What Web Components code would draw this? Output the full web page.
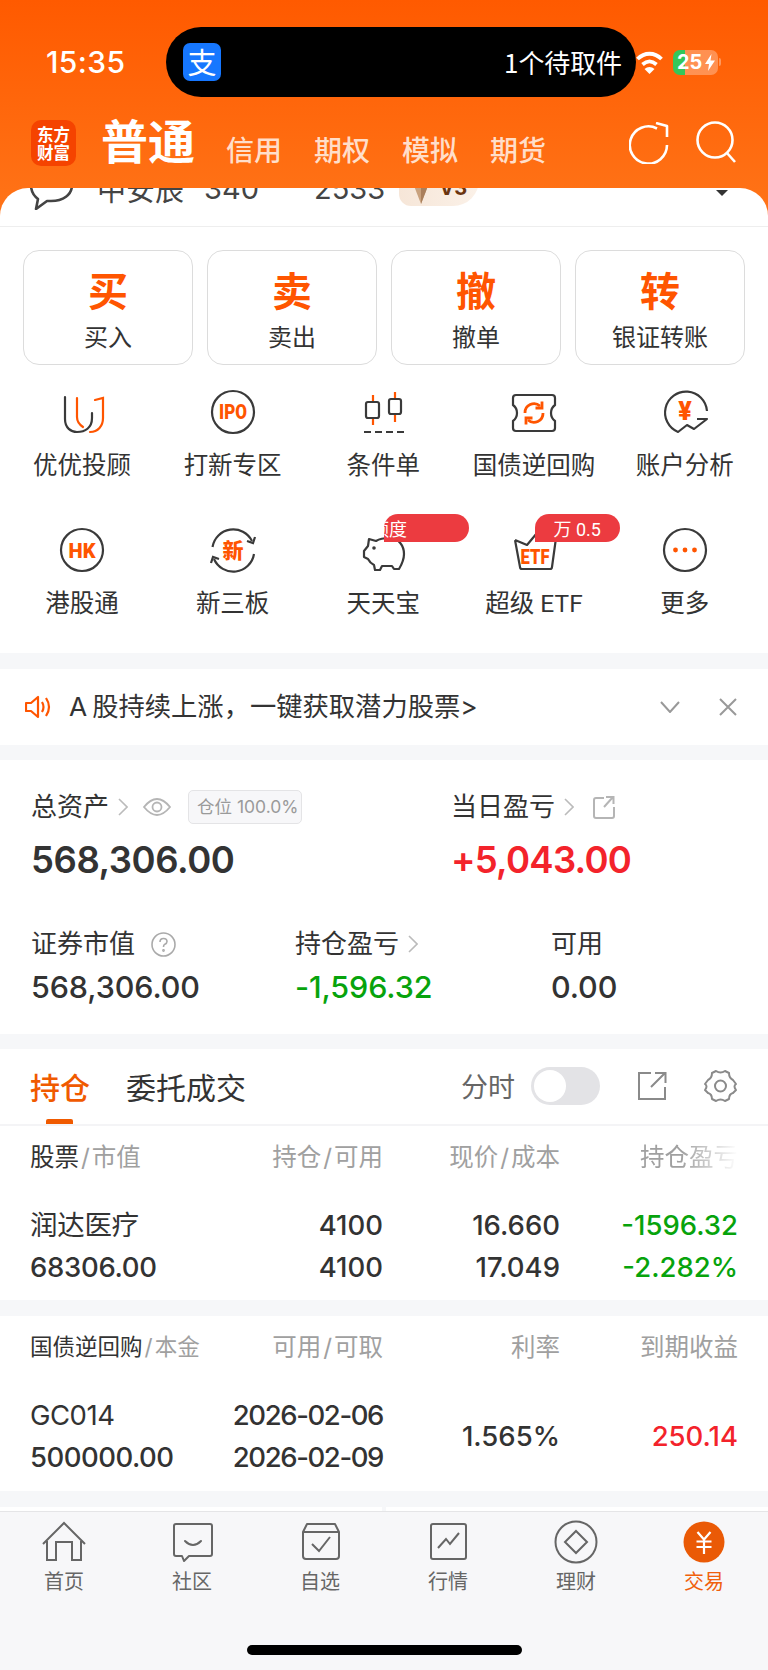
<!DOCTYPE html>
<html lang="zh">
<head>
<meta charset="utf-8">
<title>交易</title>
<style>
html, body { margin: 0; padding: 0; }
body {
  width: 768px;
  height: 1670px;
  overflow: hidden;
  font-family: Inter, "Noto Sans CJK SC", sans-serif;
  color: #333;
  background: #f6f7f9;
}
</style>
</head>
<body>
<trade-app>
  <status-bar></status-bar>
  <account-tabs></account-tabs>
  <trade-card></trade-card>
  <notice-bar></notice-bar>
  <asset-summary></asset-summary>
  <position-list></position-list>
  <bond-list></bond-list>
  <tab-bar></tab-bar>
</trade-app>

<script>
const ORANGE = '#ff5500';
const DARK = '#3a3a3a';

const glyph = (x, y, size, text, width) =>
  `<text x="${x}" y="${y}" font-size="${size}" font-weight="900" fill="${ORANGE}" text-anchor="middle" font-family="Roboto, 'Noto Sans CJK SC', sans-serif" ${width ? `textLength="${width}" lengthAdjust="spacingAndGlyphs"` : ''}>${text}</text>`;

const ICONS = {
  uj: `<g stroke-linecap="round"><path d="M5 7V29C5 38 11 42 17 42C25 42 32 38 32 28V23" stroke="${DARK}"/><path d="M17 8V27Q17 33 23 37" stroke="${ORANGE}"/><path d="M30 42C38 42 43 36 43 28V8L35 10" stroke="${ORANGE}"/></g>`,
  ipo: `<circle cx="22" cy="22" r="21" stroke="${DARK}"/>${glyph(22, 29, 19.5, 'IPO', 28)}`,
  cond: `<path d="M12 5V35M34 2V32" stroke="${ORANGE}"/><rect x="5" y="12" width="13" height="16" rx="2" fill="#fff" stroke="${DARK}"/><rect x="28" y="9" width="12" height="15" rx="2" fill="#fff" stroke="${DARK}"/><path d="M3 42H43" stroke="${DARK}" stroke-dasharray="7 4"/>`,
  ticket: `<path d="M4 5H40Q43 5 43 8V15Q39 18 39 23Q39 28 43 31V38Q43 41 40 41H4Q1 41 1 38V31Q5 28 5 23Q5 18 1 15V8Q1 5 4 5Z" stroke="${DARK}"/><path d="M13 23A9 9 0 0 1 28 16M31 23A9 9 0 0 1 16 30" stroke="${ORANGE}" stroke-width="2.8"/><path d="M30 11.500V18H23.500M14 34.500V28H20.500" stroke="${ORANGE}" stroke-width="2.800"/>`,
  yen: `<path d="M44 21A21 21 0 1 0 15 42L24 35L31 39L44 29H34" stroke="${DARK}" stroke-linejoin="round"/>${glyph(22, 30, 25, '¥')}`,
  hk: `<circle cx="22" cy="22" r="21" stroke="${DARK}"/>${glyph(22, 29.5, 21, 'HK', 27)}`,
  neeq: `<path d="M1.500 19A21 21 0 0 1 41 13M43 26A21 21 0 0 1 3 31" stroke="${DARK}"/><path d="M36 13L42 15L44 9M8 31L2 29L0 35" stroke="${DARK}"/>${glyph(22, 29.5, 21, '新')}`,
  pig: `<path d="M3 23L7 18L8 11L15 13Q20 10 28 10C38 10 43 18 43 26C43 32 41 36 38 41H33L31 38H21L19 42H14L13 37Q9 35 7 31L3 29Z" stroke="${DARK}" stroke-linejoin="round"/><circle cx="13" cy="20" r="1.8" fill="${DARK}"/>`,
  etf: `<path d="M3 12L15 17L25 5M3 12L8 39Q8 41 10 41H38Q40 41 40 39L44 10" stroke="${DARK}" stroke-linejoin="round"/>${glyph(23, 35.5, 21, 'ETF', 29)}`,
  more: `<circle cx="22" cy="22" r="21" stroke="${DARK}"/><circle cx="12.5" cy="22" r="2.4" fill="${ORANGE}"/><circle cx="22" cy="22" r="2.4" fill="${ORANGE}"/><circle cx="31.5" cy="22" r="2.4" fill="${ORANGE}"/>`,
  home: `<g stroke="#666" stroke-width="2"><path d="M1 23L22 2L43 23"/><path d="M5 20V39H14V21H30V39H39V20"/></g>`,
  talk: `<path d="M6 3H40Q42 3 42 5V33Q42 35 40 35H19L14 40L12 35H6Q4 35 4 33V5Q4 3 6 3Z" stroke="#666" stroke-width="2" stroke-linejoin="round"/><path d="M15 20Q23 28 31 20" stroke="#666" stroke-width="2" stroke-linecap="round"/>`,
  pick: `<path d="M5 11V35Q5 38 8 38H38Q41 38 41 35V11M5 11L9 3H37L41 11H5Z" stroke="#666" stroke-width="2" stroke-linejoin="round"/><path d="M14 23L21 30L32 16" stroke="#666" stroke-width="2"/>`,
  quote: `<rect x="5" y="3" width="35" height="35" rx="2" stroke="#666" stroke-width="2"/><path d="M12 27L20 18L24 23L33 12" stroke="#666" stroke-width="2"/>`,
  wealth: `<circle cx="22" cy="21" r="20.5" stroke="#666" stroke-width="2"/><path d="M22 10L33 21L22 32L11 21Z" stroke="#666" stroke-width="2"/>`,
  trade: `<circle cx="22" cy="21" r="20.5" fill="#ea5a06"/><path d="M15.500 11L22 18.500L28.500 11M14.500 20.500H29.500M14.500 26H29.500M22 18.500V33" stroke="#fff" stroke-width="2.200"/>`
};

class AppIcon extends HTMLElement {
  connectedCallback() {
    const name = this.getAttribute('name');
    this.attachShadow({ mode: 'open' }).innerHTML = `
      <style>
      :host { display: block; width: 44px; height: 44px; }
      svg { display: block; overflow: visible; }
      </style>
      <svg width="44" height="44" viewBox="0 0 44 44" fill="none" stroke-width="2.2">${ICONS[name]}</svg>`;
  }
}

class TradeApp extends HTMLElement {
  constructor() {
    super();
    this.attachShadow({ mode: 'open' }).innerHTML = `
      <style>
      :host {
        display: flex;
        flex-direction: column;
        width: 768px;
        height: 1670px;
        overflow: hidden;
        background: linear-gradient(#ff5a00, #ff7418) no-repeat 0 0 / 100% 216px, #f6f7f9;
      }
      </style>
      <slot></slot>`;
  }
}

class StatusBar extends HTMLElement {
  constructor() {
    super();
    this.attachShadow({ mode: 'open' }).innerHTML = `
      <style>
      :host {
        display: flex;
        align-items: center;
        box-sizing: border-box;
        height: 70px;
        margin-top: 27px;
        padding-left: 46px;
        color: #fff;
      }
      .time { width: 120px; font: 500 30px/1 Inter, sans-serif; letter-spacing: 0.4px; }
      .island {
        display: flex;
        align-items: center;
        justify-content: space-between;
        box-sizing: border-box;
        width: 470px;
        height: 70px;
        padding: 0 14px 0 17px;
        border-radius: 35px;
        background: #000;
      }
      .pay {
        width: 38px;
        height: 38px;
        border-radius: 7px;
        background: #1677ff;
        text-align: center;
        font: 400 29px/37px "Noto Sans CJK SC", sans-serif;
      }
      .pickup { font: 400 26px/1 "Noto Sans CJK SC", sans-serif; letter-spacing: -0.1px; }
      .battery {
        position: relative;
        width: 45px;
        height: 25px;
        margin-left: 10px;
        border-radius: 7px;
        overflow: hidden;
        background: linear-gradient(90deg, #34c759 26%, rgba(255, 255, 255, 0.3) 26%);
        text-align: left;
        font: 700 20px/25px Inter, sans-serif;
        text-indent: 4px;
      }
      .battery svg { position: absolute; right: 3px; top: 4px; }
      .nub { width: 2px; height: 8px; margin-left: 1px; border-radius: 0 2px 2px 0; background: rgba(255, 255, 255, 0.35); }
      </style>
      <span class="time">15:35</span>
      <div class="island">
        <div class="pay">支</div>
        <span class="pickup">1个待取件</span>
      </div>
      <svg width="27" height="23" viewBox="0 0 27 23" fill="none" stroke="#fff" stroke-width="3.8"><path d="M1.500 8C8.500 1 18.500 1 25.500 8M6.500 13.500C11 9.500 16 9.500 20.500 13.500"/><path d="M13.500 23L8.500 18C11.500 15.200 15.500 15.200 18.500 18Z" fill="#fff" stroke="none"/></svg>
      <div class="battery">25<svg width="10" height="17" viewBox="0 0 10 17"><path d="M6.5 0L0 10H4L3 17L10 6.5H5.5Z" fill="#fff"/></svg></div>
      <div class="nub"></div>`;
  }
}

class AccountTabs extends HTMLElement {
  constructor() {
    super();
    this.attachShadow({ mode: 'open' }).innerHTML = `
      <style>
      :host {
        display: flex;
        align-items: flex-start;
        box-sizing: border-box;
        height: 91px;
        padding: 23px 0 0 31px;
        color: #fff;
        font-family: "Noto Sans CJK SC", sans-serif;
      }
      .logo {
        width: 45px;
        height: 46px;
        margin-right: 25px;
        padding-top: 5px;
        box-sizing: border-box;
        border-radius: 10px;
        background: #f54300;
        text-align: center;
        font-size: 16.5px;
        line-height: 18px;
        font-weight: 700;
      }
      .active { width: 125px; margin-top: -4px; font-size: 47px; line-height: 46px; font-weight: 700; }
      .tab { width: 88px; margin-top: 9px; font-size: 28px; line-height: 40px; font-weight: 500; color: rgba(255, 255, 255, 0.78); }
      .tools { display: flex; gap: 27px; margin-left: auto; padding-right: 32px; }
      .refresh { margin-top: 2px; }
      .search { margin-top: 1px; }
      </style>
      <div class="logo">东方<br>财富</div>
      <span class="active">普通</span>
      <span class="tab">信用</span>
      <span class="tab">期权</span>
      <span class="tab">模拟</span>
      <span class="tab">期货</span>
      <div class="tools">
        <svg class="refresh" width="40" height="42" viewBox="0 0 40 42" fill="none" stroke="#fff" stroke-width="2.6"><path d="M38 23A18.6 18.6 0 1 1 28 6.5"/><path d="M27 1L38 4V15" stroke-linejoin="round"/></svg>
        <svg class="search" width="40" height="42" viewBox="0 0 40 42" fill="none" stroke="#fff" stroke-width="2.6"><circle cx="19" cy="19" r="17.5"/><path d="M31 32L39 41"/></svg>
      </div>`;
  }
}

class ActionButton extends HTMLElement {
  connectedCallback() {
    this.attachShadow({ mode: 'open' }).innerHTML = `
      <style>
      :host {
        display: flex;
        flex-direction: column;
        align-items: center;
        box-sizing: border-box;
        height: 115px;
        padding-top: 10px;
        border: 1px solid #dcdcdc;
        border-radius: 16px;
        font-family: "Noto Sans CJK SC", sans-serif;
      }
      .big { font-size: 40px; line-height: 56px; font-weight: 700; color: ${ORANGE}; }
      .small { font-size: 24px; line-height: 34px; margin-top: 2px; color: #333; }
      </style>
      <span class="big">${this.getAttribute('mark')}</span>
      <span class="small">${this.getAttribute('label')}</span>`;
  }
}

class MenuItem extends HTMLElement {
  connectedCallback() {
    const badge = this.getAttribute('badge');
    const shift = this.getAttribute('shift') || 'center';
    this.attachShadow({ mode: 'open' }).innerHTML = `
      <style>
      :host {
        position: relative;
        display: flex;
        flex-direction: column;
        align-items: center;
        height: 138px;
        padding-top: 26px;
        box-sizing: border-box;
        font-family: Roboto, "Noto Sans CJK SC", sans-serif;
      }
      .label { margin-top: 16px; font-size: 24.5px; line-height: 32px; color: #333; white-space: nowrap; }
      .badge {
        position: absolute;
        top: 12px;
        left: 76px;
        display: flex;
        align-items: center;
        justify-content: ${shift};
        box-sizing: border-box;
        width: 85px;
        height: 28px;
        overflow: hidden;
        border-radius: 14px 14px 14px 0;
        background: #ec3b40;
        color: #fff;
        font-size: 18px;
        white-space: nowrap;
      }
      .clip { margin-left: -13px; }
      </style>
      <app-icon name="${this.getAttribute('icon')}"></app-icon>
      <span class="label">${this.getAttribute('label')}</span>
      ${badge ? `<div class="badge"><span class="${shift === 'flex-start' ? 'clip' : ''}">${badge}</span></div>` : ''}`;
  }
}

class TradeCard extends HTMLElement {
  constructor() {
    super();
    this.attachShadow({ mode: 'open' }).innerHTML = `
      <style>
      :host {
        display: block;
        height: 465px;
        overflow: hidden;
        border-radius: 28px 28px 0 0;
        background: #fff;
        font-family: Inter, "Noto Sans CJK SC", sans-serif;
      }
      .peek {
        display: flex;
        height: 39px;
        box-sizing: border-box;
        border-bottom: 1px solid #eee;
        overflow: hidden;
        color: #444;
      }
      .peek-row {
        position: relative;
        display: flex;
        align-items: center;
        height: 44px;
        margin-top: -22px;
        padding-left: 30px;
        font-size: 29px;
        white-space: nowrap;
      }
      .peek svg.talk { flex: none; margin-right: 24px; margin-top: -1px; }
      .vip {
        position: relative;
        display: flex;
        align-items: center;
        justify-content: flex-end;
        box-sizing: border-box;
        width: 80px;
        height: 36px;
        margin: 0 0 0 14px;
        padding-right: 12px;
        border-radius: 0 0 26px 12px;
        background: linear-gradient(90deg, #f6e6d8, #fbf1e8);
        color: #6b3510;
        font-size: 20px;
        font-weight: 700;
      }
      .vip svg { position: absolute; left: 11px; top: 0; }
      .caret { position: absolute; left: 716px; top: 24px; border: 6px solid transparent; border-top: 6px solid #333; }
      .actions { display: grid; grid-template-columns: repeat(4, 170px); gap: 14px; padding: 23px 0 0 23px; }
      .menu { display: grid; grid-template-columns: repeat(5, 150.7px); margin-top: -1px; padding-left: 6.6px; }
      </style>
      <div class="peek">
        <div class="peek-row">
          <svg class="talk" width="43" height="44" viewBox="0 0 43 44" fill="none" stroke="#444" stroke-width="2.6"><path d="M21 2C33 2 42 9 42 19C42 29 33 35 21 35H17L6 43L8 33C4 30 1 25 1 19C1 9 10 2 21 2Z" stroke-linejoin="round"/></svg>
          <span>中安辰</span>
          <span style="margin-left:20px;width:110px">340</span>
          <span>2533</span>
          <span class="vip"><svg width="22" height="36" viewBox="0 0 22 36"><path d="M1 8L11 34L21 8Z" fill="#c9a27e"/><path d="M11 8V34L21 8Z" fill="#a97f5c"/></svg>V3</span>
          <i class="caret"></i>
        </div>
      </div>
      <div class="actions">
        <action-button mark="买" label="买入"></action-button>
        <action-button mark="卖" label="卖出"></action-button>
        <action-button mark="撤" label="撤单"></action-button>
        <action-button mark="转" label="银证转账"></action-button>
      </div>
      <div class="menu">
        <menu-item icon="uj" label="优优投顾"></menu-item>
        <menu-item icon="ipo" label="打新专区"></menu-item>
        <menu-item icon="cond" label="条件单"></menu-item>
        <menu-item icon="ticket" label="国债逆回购"></menu-item>
        <menu-item icon="yen" label="账户分析"></menu-item>
        <menu-item icon="hk" label="港股通"></menu-item>
        <menu-item icon="neeq" label="新三板"></menu-item>
        <menu-item icon="pig" label="天天宝" badge="额度" shift="flex-start"></menu-item>
        <menu-item icon="etf" label="超级 ETF" badge="万 0.5"></menu-item>
        <menu-item icon="more" label="更多"></menu-item>
      </div>`;
  }
}

class NoticeBar extends HTMLElement {
  constructor() {
    super();
    this.attachShadow({ mode: 'open' }).innerHTML = `
      <style>
      :host {
        display: flex;
        align-items: center;
        box-sizing: border-box;
        height: 76px;
        margin-top: 16px;
        padding-left: 25px;
        background: #fff;
        font: 26.3px/1 Inter, "Noto Sans CJK SC", sans-serif;
        color: #333;
      }
      span { margin-left: 17px; white-space: nowrap; }
      b { font-weight: 400; margin-right: 5px; }
      .down { margin-left: auto; }
      .close { margin: 0 31px 0 39px; }
      </style>
      <svg width="27" height="24" viewBox="0 0 27 24" fill="none" stroke="${ORANGE}" stroke-width="2.2"><path d="M1 8H6L13 2V22L6 16H1Z" stroke-linejoin="round"/><path d="M17 7Q20 12 17 17M21 3Q27 12 21 21"/></svg>
      <span><b>A</b>股持续上涨，一键获取潜力股票&gt;</span>
      <svg class="down" width="20" height="12" viewBox="0 0 20 12" fill="none" stroke="#999" stroke-width="2"><path d="M1 1L10 11L19 1"/></svg>
      <svg class="close" width="18" height="18" viewBox="0 0 18 18" fill="none" stroke="#999" stroke-width="2"><path d="M1 1L17 17M17 1L1 17"/></svg>`;
  }
}

const CHEVRON = `<svg class="chev" width="10" height="18" viewBox="0 0 10 18" fill="none" stroke="#bbb" stroke-width="1.6"><path d="M1 1L9 9L1 17"/></svg>`;
const SHARE_LIGHT = `<svg width="22" height="24" viewBox="0 0 22 24" fill="none" stroke="#b5b5b5" stroke-width="2"><path d="M11 3H3Q1 3 1 5V21Q1 23 3 23H19Q21 23 21 21V12M11 12L20 2M13 2H20.5V9"/></svg>`;

class AssetSummary extends HTMLElement {
  constructor() {
    super();
    this.attachShadow({ mode: 'open' }).innerHTML = `
      <style>
      :host {
        display: block;
        box-sizing: border-box;
        height: 274px;
        margin-top: 15px;
        padding: 29px 0 0 31px;
        background: #fff;
        font-family: Inter, "Noto Sans CJK SC", sans-serif;
        color: #333;
      }
      .first { display: grid; grid-template-columns: 420px 1fr; }
      .second { display: grid; grid-template-columns: 264px 256px 1fr; margin-top: 41px; }
      .label { display: flex; align-items: center; height: 36px; font-size: 26px; line-height: 36px; white-space: nowrap; }
      .chev { margin-left: 9px; }
      .big { margin-top: 10px; font-size: 36.5px; line-height: 50px; font-weight: 600; letter-spacing: -0.45px; }
      .big.red { letter-spacing: -0.75px; }
      .mid { margin-top: 5px; font-size: 30.5px; line-height: 40px; font-weight: 500; letter-spacing: -0.1px; }
      .red { color: #f3232b; }
      .green { color: #07a30c; }
      .eye { margin-left: 15px; }
      .tag {
        display: flex;
        align-items: center;
        height: 34px;
        box-sizing: border-box;
        margin-left: 17px;
        padding: 0 2px 0 8px;
        border: 1px solid #e4e4e6;
        border-radius: 5px;
        background: #f7f7f9;
        color: #9a9a9a;
        font-size: 17.5px;
      }
      .share { margin-left: 19px; display: flex; }
      .help { margin-left: 16px; }
      </style>
      <div class="first">
        <div>
          <div class="label">总资产${CHEVRON}
            <svg class="eye" width="28" height="20" viewBox="0 0 28 20" fill="none" stroke="#b5b5b5" stroke-width="1.8"><path d="M1 10Q14 -6 27 10Q14 26 1 10Z"/><circle cx="14" cy="10" r="4.5"/></svg>
            <span class="tag">仓位 100.0%</span>
          </div>
          <div class="big">568,306.00</div>
        </div>
        <div>
          <div class="label">当日盈亏${CHEVRON}<span class="share">${SHARE_LIGHT}</span></div>
          <div class="big red">+5,043.00</div>
        </div>
      </div>
      <div class="second">
        <div>
          <div class="label">证券市值
            <svg class="help" width="25" height="25" viewBox="0 0 25 25" fill="none" stroke="#aaa" stroke-width="1.6"><circle cx="12.5" cy="12.5" r="11.5"/><path d="M9 10Q9 6.5 12.5 6.5Q16 6.5 16 9.5Q16 11.5 13.5 12.5Q12.5 13 12.5 15"/><circle cx="12.5" cy="18.5" r="0.6"/></svg>
          </div>
          <div class="mid">568,306.00</div>
        </div>
        <div>
          <div class="label">持仓盈亏${CHEVRON}</div>
          <div class="mid green">-1,596.32</div>
        </div>
        <div>
          <div class="label">可用</div>
          <div class="mid">0.00</div>
        </div>
      </div>`;
  }
}

class PairCell extends HTMLElement {
  connectedCallback() {
    const color = this.getAttribute('color') || '#333';
    const tight = this.getAttribute('tight') || 0;
    this.attachShadow({ mode: 'open' }).innerHTML = `
      <style>
      :host {
        display: block;
        text-align: ${this.getAttribute('align') || 'right'};
        color: ${color};
        font-size: 27.5px;
        line-height: 42px;
        font-weight: 500;
        letter-spacing: ${tight}px;
        white-space: nowrap;
      }
      .plain { font-weight: 400; }
      </style>
      <div class="${this.hasAttribute('plain') ? 'plain' : ''}">${this.getAttribute('top')}</div>
      <div>${this.getAttribute('bottom')}</div>`;
  }
}

class HeadCell extends HTMLElement {
  connectedCallback() {
    const strong = this.getAttribute('strong');
    const fade = this.hasAttribute('fade');
    const text = this.getAttribute('text').replace('/', '<i>/</i>');
    this.attachShadow({ mode: 'open' }).innerHTML = `
      <style>
      :host {
        display: block;
        text-align: ${strong ? 'left' : 'right'};
        font-size: ${this.getAttribute('size') || 24.5}px;
        line-height: 32px;
        color: #a0a0a0;
        white-space: nowrap;
        ${fade ? '-webkit-mask-image: linear-gradient(90deg, #000 68%, transparent 100%);' : ''}
      }
      b { font-weight: 400; color: #333; }
      i { font-style: normal; margin: 0 2px; }
      </style>
      ${strong ? `<b>${strong}</b>` : ''}<span>${text}</span>`;
  }
}

const TABLE_STYLE = `
  .row { display: grid; grid-template-columns: 170px 183px 177px 178px; }
`;

class PositionList extends HTMLElement {
  constructor() {
    super();
    this.attachShadow({ mode: 'open' }).innerHTML = `
      <style>
      :host {
        display: block;
        height: 251px;
        margin-top: 15px;
        background: #fff;
        font-family: Inter, "Noto Sans CJK SC", sans-serif;
        color: #333;
      }
      ${TABLE_STYLE}
      .bar {
        position: relative;
        display: flex;
        align-items: center;
        box-sizing: border-box;
        height: 77px;
        padding: 0 30px 2px 30px;
        border-bottom: 2px solid #f4f4f6;
      }
      .on { font-size: 30px; color: #f05a00; font-weight: 500; margin-right: 36px; }
      .off { font-size: 30px; }
      .under { position: absolute; left: 46px; bottom: 0; width: 27px; height: 5px; border-radius: 2px 2px 0 0; background: #f05a00; }
      .sub { margin-left: auto; font-size: 27px; color: #666; }
      .toggle { width: 69px; height: 38px; margin: 0 37px 0 16px; box-sizing: border-box; padding: 3px; border-radius: 19px; background: #e3e3e6; }
      .toggle i { display: block; width: 32px; height: 32px; border-radius: 50%; background: #fff; }
      .gear { margin-left: 36px; }
      .head { padding: 15px 30px 0; }
      .body { padding: 31px 30px 0; }
      </style>
      <div class="bar">
        <span class="on">持仓</span>
        <span class="off">委托成交</span>
        <i class="under"></i>
        <span class="sub">分时</span>
        <div class="toggle"><i></i></div>
        <svg width="30" height="30" viewBox="0 0 30 30" fill="none" stroke="#8a8a8a" stroke-width="2"><path d="M14 2H2V28H28V16M14 16L28 2M18 2H28.500V12"/></svg>
        <svg class="gear" width="35" height="34" viewBox="0 0 35 34" fill="none" stroke="#8a8a8a" stroke-width="2"><path d="M13 2Q17.500 5 22 2L26 4Q26 9 30 11L33 15Q30 17 33 21L30 24Q26 25 26 30L22 32Q17.500 29 13 32L9 30Q9 25 5 24L2 21Q5 17 2 15L5 11Q9 9 9 4Z" stroke-linejoin="round"/><circle cx="17.500" cy="17" r="5.500"/></svg>
      </div>
      <div class="row head">
        <head-cell strong="股票" text="/市值"></head-cell>
        <head-cell text="持仓/可用"></head-cell>
        <head-cell text="现价/成本"></head-cell>
        <head-cell text="持仓盈亏" fade></head-cell>
      </div>
      <div class="row body">
        <pair-cell align="left" top="润达医疗" bottom="68306.00" tight="-0.3" plain></pair-cell>
        <pair-cell top="4100" bottom="4100"></pair-cell>
        <pair-cell top="16.660" bottom="17.049"></pair-cell>
        <pair-cell top="-1596.32" bottom="-2.282%" color="#07a30c"></pair-cell>
      </div>`;
  }
}

class BondList extends HTMLElement {
  constructor() {
    super();
    this.attachShadow({ mode: 'open' }).innerHTML = `
      <style>
      :host {
        display: block;
        height: 175px;
        margin-top: 16px;
        background: #fff;
        font-family: Inter, "Noto Sans CJK SC", sans-serif;
        color: #333;
      }
      ${TABLE_STYLE}
      .head { padding: 15px 30px 0; }
      .body { padding: 31px 30px 0; }
      .rate { align-self: center; text-align: right; font-size: 27.5px; font-weight: 500; white-space: nowrap; }
      .red { color: #f3232b; }
      </style>
      <div class="row head">
        <head-cell strong="国债逆回购" text="/本金" size="22.500"></head-cell>
        <head-cell text="可用/可取"></head-cell>
        <head-cell text="利率"></head-cell>
        <head-cell text="到期收益"></head-cell>
      </div>
      <div class="row body">
        <pair-cell align="left" top="GC014" bottom="500000.00" tight="-0.5" plain></pair-cell>
        <pair-cell top="2026-02-06" bottom="2026-02-09" tight="-1.4"></pair-cell>
        <div class="rate">1.565%</div>
        <div class="rate red">250.14</div>
      </div>`;
  }
}

class TabBar extends HTMLElement {
  constructor() {
    super();
    const tabs = [
      ['home', '首页'], ['talk', '社区'], ['pick', '自选'],
      ['quote', '行情'], ['wealth', '理财'], ['trade', '交易']
    ];
    this.attachShadow({ mode: 'open' }).innerHTML = `
      <style>
      :host {
        position: relative;
        display: block;
        height: 163px;
        margin-top: 16px;
        box-sizing: border-box;
        padding-top: 4px;
        background: linear-gradient(#fff 4px, transparent 4px);
      }
      .wrap { border-top: 1px solid #e5e5e7; height: 158px; background: #f7f7f9; display: grid; grid-template-columns: repeat(6, 128px); align-content: start; }
      .tab { display: flex; flex-direction: column; align-items: center; padding-top: 9px; font: 20px/30px "Noto Sans CJK SC", sans-serif; color: #666; }
      .tab span { margin-top: 1px; }
      .tab.on { color: #f0600c; }
      .home-bar { position: absolute; left: 247px; top: 138px; width: 275px; height: 10px; border-radius: 5px; background: #000; }
      .gap { position: absolute; left: 382px; top: 0; width: 4px; height: 4px; background: #f6f7f9; }
      </style>
      <i class="gap"></i>
      <div class="wrap">
        ${tabs.map(([icon, label], i) => `
          <div class="tab ${i === 5 ? 'on' : ''}">
            <app-icon name="${icon}"></app-icon>
            <span>${label}</span>
          </div>`).join('')}
      </div>
      <i class="home-bar"></i>`;
  }
}

customElements.define('app-icon', AppIcon);
customElements.define('trade-app', TradeApp);
customElements.define('status-bar', StatusBar);
customElements.define('account-tabs', AccountTabs);
customElements.define('action-button', ActionButton);
customElements.define('menu-item', MenuItem);
customElements.define('trade-card', TradeCard);
customElements.define('notice-bar', NoticeBar);
customElements.define('asset-summary', AssetSummary);
customElements.define('pair-cell', PairCell);
customElements.define('head-cell', HeadCell);
customElements.define('position-list', PositionList);
customElements.define('bond-list', BondList);
customElements.define('tab-bar', TabBar);
</script>
</body>
</html>
